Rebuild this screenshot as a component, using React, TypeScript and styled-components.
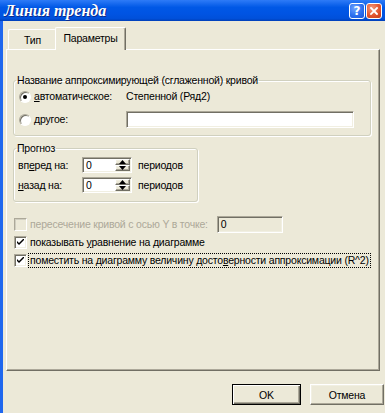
import React from 'react';
import styled, { createGlobalStyle, css } from 'styled-components';

const Global = createGlobalStyle`
  html, body { margin: 0; padding: 0; background: #ECE9D8; }
  body { width: 385px; height: 413px; overflow: hidden; }
  * { box-sizing: border-box; }
`;

const sunken = css`
  border-style: solid;
  border-width: 1px;
  border-color: #ACA899 #FFFFFF #FFFFFF #ACA899;
  box-shadow: inset 1px 1px #716F64, inset -1px -1px #F1EFE2;
`;

const raised = css`
  border-style: solid;
  border-width: 1px;
  border-color: #FFFFFF #716F64 #716F64 #FFFFFF;
  box-shadow: inset -1px -1px #ACA899, inset 1px 1px #F1EFE2;
`;

const Window = styled.div`
  width: 385px;
  height: 413px;
  display: flex;
  flex-direction: column;
  background: #ECE9D8;
  font-family: "Liberation Sans", Arial, sans-serif;
  font-size: 10.5px;
  letter-spacing: -0.2px;
  color: #000;
  overflow: hidden;
`;

const TitleBar = styled.div`
  height: 21px;
  flex: none;
  display: flex;
  align-items: center;
  padding: 0 3px 0 4px;
  background: linear-gradient(to bottom, #2E7BF7 0%, #1A6CF0 15%, #0058E6 35%, #0054E3 65%, #0050DA 88%, #003FB8 100%);
`;

const Title = styled.div`
  flex: 1;
  font-family: "Liberation Serif", "Times New Roman", serif;
  font-weight: bold;
  font-style: italic;
  font-size: 16px;
  letter-spacing: 0;
  line-height: 21px;
  color: #fff;
  text-shadow: 1px 1px 0 #0B2A8A;
`;

const TitleButton = styled.div<{ $close?: boolean }>`
  width: 16px;
  height: 16px;
  margin-left: 1px;
  border: 1px solid #fff;
  border-radius: 3px;
  display: flex;
  align-items: center;
  justify-content: center;
  color: #fff;
  font-family: "DejaVu Sans", sans-serif;
  font-weight: bold;
  font-size: 12px;
  letter-spacing: 0;
  line-height: 1;
  background: ${(p) =>
    p.$close
      ? 'radial-gradient(circle at 35% 30%, #F59A7C 0%, #E2552F 55%, #C23B1A 100%)'
      : 'radial-gradient(circle at 35% 30%, #6FA3FF 0%, #2B6FF0 55%, #1A55D8 100%)'};
`;

const Frame = styled.div`
  flex: 1;
  display: flex;
  flex-direction: column;
  border-left: 3px solid #1F67EE;
`;

const TabStrip = styled.div`
  height: 28px;
  display: flex;
  align-items: flex-end;
  padding-left: 5px;
  position: relative;
  z-index: 1;
`;

const Tab = styled.div<{ $active?: boolean }>`
  display: flex;
  align-items: center;
  justify-content: center;
  border-top: 1px solid #fff;
  border-left: 1px solid #fff;
  border-right: 1px solid #716F64;
  border-top-left-radius: 2px;
  border-top-right-radius: 2px;
  background: #ECE9D8;
  ${(p) =>
    p.$active
      ? css`
          width: 71px;
          height: 23px;
          margin-bottom: -1px;
          margin-left: -1px;
          padding-bottom: 2px;
          box-shadow: inset -1px 0 #ACA899;
        `
      : css`
          width: 48px;
          height: 20px;
          padding-top: 1px;
          border-right: none;
        `}
`;

const Panel = styled.div`
  margin-left: 3px;
  width: 374px;
  height: 322px;
  border-top: 1px solid #fff;
  border-left: 1px solid #fff;
  border-right: 1px solid #716F64;
  border-bottom: 1px solid #716F64;
  box-shadow: inset -1px -1px #ACA899;
  display: flex;
  flex-direction: column;
  padding: 24px 0 0 6px;
`;

const Group = styled.fieldset<{ $width: number; $gap?: number }>`
  width: ${(p) => p.$width}px;
  margin: ${(p) => p.$gap ?? 0}px 0 0 0;
  padding: 1px 0 7px 0;
  border: 1px solid #D0D0BF;
  border-radius: 3px;
  box-shadow: 1px 1px 0 #fff, inset 1px 1px 0 #fff;
`;

const Legend = styled.legend`
  margin-left: 2px;
  padding: 0 1px;
  line-height: 13px;
`;

const NameGrid = styled.div`
  display: grid;
  grid-template-columns: 13px 90px 228px;
  grid-auto-rows: 17px;
  column-gap: 2px;
  row-gap: 6px;
  align-items: center;
  padding-left: 5px;
`;

const Radio = styled.span<{ $checked?: boolean }>`
  width: 12px;
  height: 12px;
  border-radius: 50%;
  background: #fff;
  border: 1px solid;
  border-color: #ACA899 #fff #fff #ACA899;
  box-shadow: inset 1px 1px 0 #716F64;
  display: flex;
  align-items: center;
  justify-content: center;
  &::after {
    content: '';
    width: 4px;
    height: 4px;
    border-radius: 50%;
    background: ${(p) => (p.$checked ? '#000' : 'transparent')};
  }
`;

const Label = styled.span<{ $disabled?: boolean }>`
  white-space: nowrap;
  line-height: 13px;
  color: ${(p) => (p.$disabled ? '#ACA899' : '#000')};
`;

const U = styled.span`
  text-decoration: underline;
`;

const TextField = styled.div<{ $width: number; $disabled?: boolean }>`
  ${sunken};
  width: ${(p) => p.$width}px;
  height: 17px;
  background: ${(p) => (p.$disabled ? '#ECE9D8' : '#fff')};
  padding: 1px 3px;
  line-height: 13px;
`;

const ForecastGrid = styled.div`
  display: grid;
  grid-template-columns: 58px 50px auto;
  grid-auto-rows: 16px;
  column-gap: 6px;
  row-gap: 4px;
  align-items: center;
  padding: 1px 0 1px 4px;
`;

const Spin = styled.div`
  ${sunken};
  width: 50px;
  height: 16px;
  background: #fff;
  display: flex;
  padding: 1px;
`;

const SpinText = styled.div`
  flex: 1;
  padding: 0 2px;
  line-height: 13px;
`;

const SpinButtons = styled.div`
  width: 15px;
  display: flex;
  flex-direction: column;
`;

const SpinButton = styled.div`
  ${raised};
  flex: 1;
  background: #ECE9D8;
  display: flex;
  align-items: center;
  justify-content: center;
`;

const Arrow = ({ up }: { up?: boolean }) => (
  <svg width="7" height="4" viewBox="0 0 7 4">
    <polygon points={up ? '3.5,0 7,4 0,4' : '0,0 7,0 3.5,4'} fill="#000" />
  </svg>
);

const CheckList = styled.div`
  display: flex;
  flex-direction: column;
  margin-top: 14px;
  gap: 1px;
`;

const CheckRow = styled.div`
  display: flex;
  align-items: center;
  height: 17px;
  gap: 2px;
`;

const CheckBox = styled.span<{ $disabled?: boolean }>`
  width: 13px;
  height: 13px;
  flex: none;
  margin-left: 1px;
  display: flex;
  align-items: center;
  justify-content: center;
  ${(p) =>
    p.$disabled
      ? css`
          border: 1px solid #ACA899;
          border-right-color: #fff;
          border-bottom-color: #fff;
          box-shadow: inset 1px 1px 0 #D0CEC0;
          background: #ECE9D8;
        `
      : css`
          ${sunken};
          background: #fff;
        `}
`;

const CheckLabel = styled.span<{ $focus?: boolean; $disabled?: boolean }>`
  white-space: nowrap;
  line-height: 13px;
  padding: 0 1px;
  margin-right: ${(p) => (p.$disabled ? '6px' : '0')};
  color: ${(p) => (p.$disabled ? '#ACA899' : '#000')};
  outline: ${(p) => (p.$focus ? '1px dotted #000' : 'none')};
`;

const Tick = () => (
  <svg width="7" height="7" viewBox="0 0 7 7">
    <path d="M0 2 L0 4 L2 6 L7 1 L7 -1 L2 4 Z" fill="#000" />
  </svg>
);

const ButtonRow = styled.div`
  display: flex;
  justify-content: flex-end;
  gap: 9px;
  margin-top: 13px;
  padding-right: 1px;
`;

const Button = styled.div<{ $default?: boolean }>`
  width: ${(p) => (p.$default ? 69 : 74)}px;
  height: 21px;
  display: flex;
  align-items: center;
  justify-content: center;
  background: #ECE9D8;
  ${raised};
  ${(p) =>
    p.$default &&
    css`
      border: 1px solid #000;
      box-shadow: inset 1px 1px #fff, inset -1px -1px #716F64, inset -2px -2px #ACA899;
    `}
`;

export default function App() {
  return (
    <Window>
      <Global />
      <TitleBar>
        <Title>Линия тренда</Title>
        <TitleButton>?</TitleButton>
        <TitleButton $close>
          <svg width="8" height="8" viewBox="0 0 8 8">
            <path d="M1 1 L7 7 M7 1 L1 7" stroke="#fff" strokeWidth="1.8" strokeLinecap="square" />
          </svg>
        </TitleButton>
      </TitleBar>
      <Frame>
        <TabStrip>
          <Tab>Тип</Tab>
          <Tab $active>Параметры</Tab>
        </TabStrip>
        <Panel>
          <Group $width={358}>
            <Legend>Название аппроксимирующей (сглаженной) кривой</Legend>
            <NameGrid>
              <Radio $checked />
              <Label>
                <U>а</U>втоматическое:
              </Label>
              <Label>Степенной (Ряд2)</Label>
              <Radio />
              <Label>
                <U>д</U>ругое:
              </Label>
              <TextField $width={228} />
            </NameGrid>
          </Group>
          <Group $width={185} $gap={6}>
            <Legend>Прогноз</Legend>
            <ForecastGrid>
              <Label>
                вп<U>е</U>ред на:
              </Label>
              <Spin>
                <SpinText>0</SpinText>
                <SpinButtons>
                  <SpinButton>
                    <Arrow up />
                  </SpinButton>
                  <SpinButton>
                    <Arrow />
                  </SpinButton>
                </SpinButtons>
              </Spin>
              <Label>периодов</Label>
              <Label>
                <U>н</U>азад на:
              </Label>
              <Spin>
                <SpinText>0</SpinText>
                <SpinButtons>
                  <SpinButton>
                    <Arrow up />
                  </SpinButton>
                  <SpinButton>
                    <Arrow />
                  </SpinButton>
                </SpinButtons>
              </Spin>
              <Label>периодов</Label>
            </ForecastGrid>
          </Group>
          <CheckList>
            <CheckRow>
              <CheckBox $disabled />
              <CheckLabel $disabled>пересечение кривой с осью Y в точке:</CheckLabel>
              <TextField $width={66} $disabled>
                0
              </TextField>
            </CheckRow>
            <CheckRow>
              <CheckBox>
                <Tick />
              </CheckBox>
              <CheckLabel>
                показывать <U>у</U>равнение на диаграмме
              </CheckLabel>
            </CheckRow>
            <CheckRow>
              <CheckBox>
                <Tick />
              </CheckBox>
              <CheckLabel $focus>
                поместить на диаграмму величину досто<U>в</U>ерности аппроксимации (R^2)
              </CheckLabel>
            </CheckRow>
          </CheckList>
        </Panel>
        <ButtonRow>
          <Button $default>OK</Button>
          <Button>Отмена</Button>
        </ButtonRow>
      </Frame>
    </Window>
  );
}
